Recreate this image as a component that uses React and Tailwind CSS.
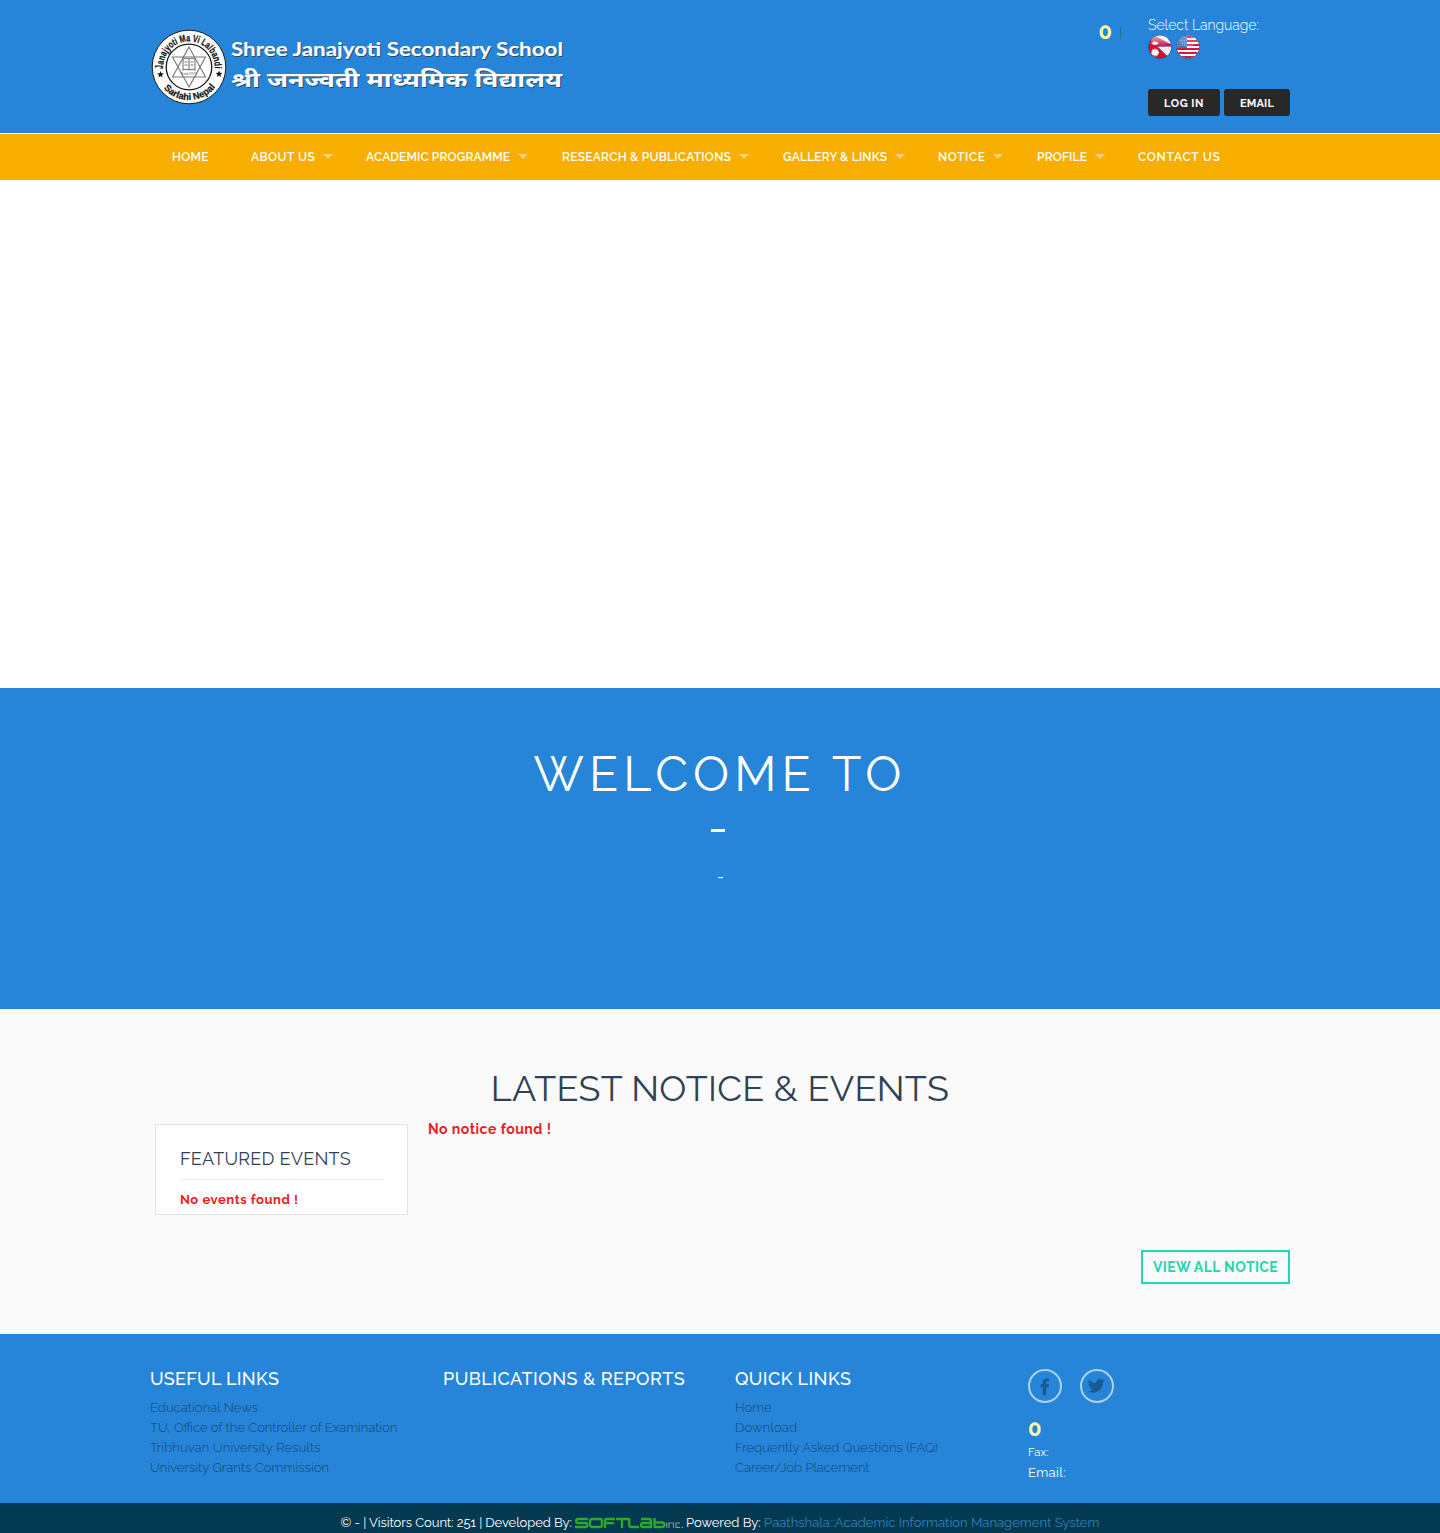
import React from 'react';

const NAV = [
  { label: 'HOME', cls: 'w-[37px] tracking-[0.25px] mr-[42px]' },
  { label: 'ABOUT US', cls: 'w-[64px] tracking-[0.46px]', arrow: 'mr-[33px]' },
  { label: 'ACADEMIC PROGRAMME', cls: 'w-[144px] tracking-[0.13px]', arrow: 'mr-[34px]' },
  { label: 'RESEARCH & PUBLICATIONS', cls: 'w-[169px] tracking-[0.24px]', arrow: 'mr-[34px]' },
  { label: 'GALLERY & LINKS', cls: 'w-[104px] tracking-[0.15px]', arrow: 'mr-[33px]' },
  { label: 'NOTICE', cls: 'w-[47px] tracking-[0.56px]', arrow: 'mr-[34px]' },
  { label: 'PROFILE', cls: 'w-[50px] tracking-[0.19px]', arrow: 'mr-[33px]' },
  { label: 'CONTACT US', cls: 'w-[82px] tracking-[0.74px]' },
];

const USEFUL = [
  ['Educational News', 'tracking-[0.09px]'],
  ['TU, Office of the Controller of Examination', ''],
  ['Tribhuvan University Results', 'tracking-[0.15px]'],
  ['University Grants Commission', 'tracking-[0.07px]'],
];

const QUICK = [
  ['Home', ''],
  ['Download', 'tracking-[0.18px]'],
  ['Frequently Asked Questions (FAQ)', 'tracking-[0.06px]'],
  ['Career/Job Placement', ''],
];

function Logo() {
  return (
    <svg className="block" width="420" height="80" viewBox="0 0 420 80">
      <defs>
        <path id="arcTop" d="M14 46 A25.7 25.7 0 1 1 64 46" />
        <path id="arcBottom" d="M6.5 47 A33.3 33.3 0 0 0 71.5 47" />
      </defs>
      <circle cx="39" cy="40" r="36.8" fill="#fff" stroke="#1b1b1b" strokeWidth="1" />
      <circle cx="39" cy="40" r="22.8" fill="#fff" stroke="#1b1b1b" strokeWidth="1.3" />
      <g fill="none" stroke="#777" strokeWidth="1.1">
        <path d="M39 20 L55.5 50 H22.5 Z" />
        <path d="M39 60 L22.5 30 H55.5 Z" />
        <path d="M33 32 q3 -1.5 6 0 q3 -1.5 6 0 v11 q-3 -1.5 -6 0 q-3 -1.5 -6 0 z M39 32 v11 M34.5 35 h3 M34.5 38 h3 M40.5 35 h3 M40.5 38 h3" />
      </g>
      <text x="39" y="47.5" textAnchor="middle" fontSize="3.5" fontFamily="Liberation Sans, sans-serif" fill="#555">Estd 1971</text>
      <g fontFamily="Liberation Sans, sans-serif" fontWeight="700" fontSize="10" fill="#111" stroke="#111" strokeWidth="0.2">
        <text><textPath href="#arcTop" startOffset="4" textLength="84" lengthAdjust="spacingAndGlyphs">Janajyoti Ma Vi Lalbandi</textPath></text>
        <text fontSize="9.5"><textPath href="#arcBottom" startOffset="16" textLength="59" lengthAdjust="spacingAndGlyphs">Sarlahi Nepal</textPath></text>
      </g>
      <path d="M10.5 44 l.9 2.3 2.5.1 -1.9 1.6 .6 2.4 -2.1-1.3 -2.1 1.3 .6-2.4 -1.9-1.6 2.5-.1z" fill="#111" />
      <path d="M69 43.5 l.9 2.3 2.5.1 -1.9 1.6 .6 2.4 -2.1-1.3 -2.1 1.3 .6-2.4 -1.9-1.6 2.5-.1z" fill="#111" />
      {[['#2b4a66', 1], ['#fff', 0]].map(([c, o]) => (
        <g key={c} fill={c} stroke={c} transform={`translate(${o} ${o})`}>
          <text x="81" y="29" fontFamily="Lato, sans-serif" fontWeight="700" fontSize="19.5" strokeWidth="0.1" textLength="332" lengthAdjust="spacingAndGlyphs">Shree Janajyoti Secondary School</text>
          <text x="81" y="60" fontFamily="'Noto Sans Devanagari', 'Noto Sans', sans-serif" fontWeight="700" fontSize="20" strokeWidth="0" textLength="331" lengthAdjust="spacingAndGlyphs">श्री जनज्वती माध्यमिक विद्यालय</text>
        </g>
      ))}
    </svg>
  );
}

function NepalFlag() {
  return (
    <svg className="block" width="24" height="24" viewBox="0 0 24 24">
      <defs>
        <clipPath id="np"><circle cx="12" cy="12" r="11.2" /></clipPath>
        <linearGradient id="shine" x1="0" y1="0" x2="0" y2="1">
          <stop offset="0" stopColor="#fff" stopOpacity=".65" />
          <stop offset="1" stopColor="#fff" stopOpacity="0" />
        </linearGradient>
      </defs>
      <circle cx="12" cy="12.2" r="11.8" fill="#1c4672" opacity=".7" />
      <g clipPath="url(#np)">
        <rect width="24" height="24" fill="#cf1138" />
        <path d="M5 0 L24 10 V0 Z" fill="#f6f6fa" />
        <path d="M9 11.5 L24 11.5 V24 H22 Z" fill="#f2f2f8" />
        <path d="M5 0 L24 10.5 L9 11.2 L22 24" fill="none" stroke="#3b57a5" strokeWidth="0.8" />
        <path d="M3 8 q4 4 8 0 l-1.5-.3 -.7-1.3 -1.5.6 -1.3-1 -1 1.5z" fill="#fff" />
        <circle cx="7" cy="17.5" r="3" fill="#fff" />
        <circle cx="7" cy="17.5" r="3.4" fill="none" stroke="#fff" strokeWidth="1.2" strokeDasharray="1 .8" />
      </g>
      <ellipse cx="12" cy="6" rx="9" ry="5.4" fill="url(#shine)" />
    </svg>
  );
}

function UsFlag() {
  return (
    <svg className="block" width="24" height="24" viewBox="0 0 24 24">
      <defs><clipPath id="us"><circle cx="12" cy="12" r="11.2" /></clipPath></defs>
      <circle cx="12" cy="12.2" r="11.8" fill="#1c4672" opacity=".7" />
      <g clipPath="url(#us)">
        <rect width="24" height="24" fill="#fff" />
        {[1, 5, 9, 13, 17, 21].map((y) => <rect key={y} y={y} width="24" height="2" fill="#d5173c" />)}
        <rect width="11" height="13" fill="#4272b8" />
        {[3, 5.5, 8, 10.5].map((y) => <path key={y} d={`M1 ${y} H11`} stroke="#8fb0dc" strokeWidth=".9" strokeDasharray="1 1.3" />)}
      </g>
      <ellipse cx="12" cy="6" rx="9" ry="5.4" fill="#fff" opacity=".2" />
    </svg>
  );
}

function SoftlabLogo() {
  return (
    <svg className="mr-[3px] ml-[3px] inline-block align-[-2px]" width="108" height="12" viewBox="0 0 108 12">
      <g fill="none" stroke="#2dab2b" strokeWidth="2.3" strokeLinejoin="round">
        <path d="M13 2 H3.5 Q1.2 2 1.2 4 Q1.2 6 3.5 6 H10.5 Q12.3 6 12.3 8 Q12.3 10 10.5 10 H0" />
        <path d="M17.5 2 H24.5 Q27 2 27 4 V8 Q27 10 24.5 10 H17.5 Q15 10 15 8 V4 Q15 2 17.5 2Z" />
        <path d="M40 2 H32 Q30 2 30 4 V11 M30 6.2 H39" />
        <path d="M41 2 H53 M47 2 V11" />
        <path d="M54.2 1 V8 Q54.2 10 56.5 10 H64" />
        <path d="M66 2 H74 Q76 2 76 4 V10 H68 Q66 10 66 8 Q66 6 68 6 H76" />
        <path d="M79.5 1 V10 H87 Q89.5 10 89.5 8 Q89.5 5.5 87 5.5 H79.5" />
      </g>
      <g fill="none" stroke="#8b969c" strokeWidth="1.1">
        <path d="M91.8 5.5 V11 M94 11 V6 H98.5 V11 M105 6 H101 V10.4 H105 M106.5 10.4 H108" />
      </g>
    </svg>
  );
}

export default function App() {
  return (
    <div className="flex h-[1533px] w-[1440px] flex-col overflow-hidden bg-white font-[Raleway,Lato,sans-serif] text-white">
      <header className="h-[133px] bg-[#2685d8]">
        <div className="mx-auto flex w-[1140px] justify-between">
          <div className="pt-[27px]"><Logo /></div>
          <div className="flex">
            <div className="mr-[27px] flex items-start">
              <span className="mt-[19px] text-[22px] leading-6 font-bold text-[#fffc9c]">0</span>
              <span className="mt-[27px] ml-2 h-3 w-px bg-[#2c6f93]" />
            </div>
            <div className="w-[142px] pt-[15px]">
              <div className="h-5 text-[14px] leading-5 font-light tracking-[-0.03px] whitespace-nowrap">Select Language:</div>
              <div className="flex gap-1"><NepalFlag /><UsFlag /></div>
              <div className="mt-[30px] flex gap-1 text-[11px] font-bold">
                <a className="h-[27px] w-[72px] rounded-[3px] bg-[#282828] text-center leading-[29px] tracking-[0.55px]">LOG IN</a>
                <a className="h-[27px] w-[66px] rounded-[3px] bg-[#282828] text-center leading-[29px] tracking-[0.2px]">EMAIL</a>
              </div>
            </div>
          </div>
        </div>
      </header>

      <nav className="mt-px h-[46px] bg-[#f7ae00]">
        <div className="mx-auto flex h-[46px] w-[1140px] items-center pl-[22px] text-[12px] leading-[18px] font-semibold">
          {NAV.map((n) => (
            <div key={n.label} className="flex items-center">
              <span className={`whitespace-nowrap ${n.cls}`}>{n.label}</span>
              {n.arrow && <span className={`mb-px ml-2 h-0 w-0 border-x-[5px] border-t-[5px] border-x-transparent border-t-[#fbd27a] ${n.arrow}`} />}
            </div>
          ))}
        </div>
      </nav>

      <div className="h-[508px] bg-white" />

      <section className="h-[321px] bg-[#2685d8] pt-[54px] text-center">
        <h1 className="text-[48px] leading-[64px] font-normal tracking-[5.2px]">WELCOME TO</h1>
        <div className="mt-[23px] mr-auto ml-[711px] h-[3px] w-[14px] bg-white" />
        <div className="mt-[33px] h-6 pl-px text-[16px] leading-6 font-normal">-</div>
      </section>

      <section className="h-[325px] bg-[#fafafa]">
        <div className="mx-auto w-[1140px] pt-[59px]">
          <h2 className="text-center text-[36px] leading-10 font-normal tracking-[0.28px] text-[#2f4152]">LATEST NOTICE &amp; EVENTS</h2>
          <div className="mt-[7px] flex h-[92px] pl-[5px]">
            <div className="mt-[9px] h-[91px] w-[253px] shrink-0 border border-[#dfe4e9] bg-white px-6">
              <h3 className="h-[55px] border-b border-[#e9ecee] pt-[22px] text-[18px] leading-6 font-normal tracking-[0.25px] text-[#2f4152]">FEATURED EVENTS</h3>
              <p className="mt-[10px] text-[13px] leading-5 font-bold tracking-[0.54px] text-[#ec1c24]">No events found !</p>
            </div>
            <p className="mt-1 ml-5 text-[14px] leading-5 font-bold tracking-[0.49px] text-[#ec1c24]">No notice found !</p>
          </div>
          <div className="mt-[43px] flex justify-end">
            <a className="h-[34px] w-[149px] border-2 border-[#20d8ae] text-center text-[14px] leading-[30px] font-bold tracking-[0.38px] text-[#20d8ae]">VIEW ALL NOTICE</a>
          </div>
        </div>
      </section>

      <footer className="h-[169px] bg-[#2685d8]">
        <div className="mx-auto flex w-[1140px] pt-[35px]">
          <div className="w-[293px]">
            <h4 className="text-[18px] leading-5 font-medium tracking-[0.28px]">USEFUL LINKS</h4>
            <ul className="mt-[9px] text-[13px] leading-5 font-light whitespace-nowrap text-[#10477a]">
              {USEFUL.map(([t, c]) => <li key={t} className={c}>{t}</li>)}
            </ul>
          </div>
          <div className="w-[292px]">
            <h4 className="text-[18px] leading-5 font-medium tracking-[0.48px] whitespace-nowrap">PUBLICATIONS &amp; REPORTS</h4>
          </div>
          <div className="w-[293px]">
            <h4 className="text-[18px] leading-5 font-medium tracking-[0.42px]">QUICK LINKS</h4>
            <ul className="mt-[9px] text-[13px] leading-5 font-light whitespace-nowrap text-[#10477a]">
              {QUICK.map(([t, c]) => <li key={t} className={c}>{t}</li>)}
            </ul>
          </div>
          <div>
            <div className="flex gap-[18px]">
              <a className="flex h-[34px] w-[34px] items-center justify-center rounded-full border-2 border-[#b0d0e6]">
                <svg width="10" height="17" viewBox="0 0 10 17"><path d="M2.8 17 V9.3 H.6 V6.2 H2.8 V4.3 Q2.8.4 6.2 .4 H9 V3.6 H7.3 Q6.2 3.6 6.2 4.8 V6.2 H9 L8.6 9.3 H6.2 V17 Z" fill="#175a94" /></svg>
              </a>
              <a className="flex h-[34px] w-[34px] items-center justify-center rounded-full border-2 border-[#b0d0e6]">
                <svg className="mr-px" width="17" height="14" viewBox="0 0 24 20"><path d="M23.6 2.4a9.6 9.6 0 0 1-2.8.8A4.9 4.9 0 0 0 22.9.4a9.8 9.8 0 0 1-3.1 1.2A4.9 4.9 0 0 0 11.5 6 13.9 13.9 0 0 1 1.4.9a4.9 4.9 0 0 0 1.5 6.5A4.9 4.9 0 0 1 .7 6.8a4.9 4.9 0 0 0 3.9 4.9 4.9 4.9 0 0 1-2.2.1 4.9 4.9 0 0 0 4.6 3.4A9.8 9.8 0 0 1-.3 17.2 13.9 13.9 0 0 0 21.1 4.9a9.9 9.9 0 0 0 2.5-2.5z" fill="#175a94" /></svg>
              </a>
            </div>
            <div className="mt-[13px] text-[22px] leading-6 font-bold text-[#fffc9c]">0</div>
            <div className="mt-[5px] text-[11px] leading-4 tracking-[0.4px]">Fax:</div>
            <div className="mt-[3px] text-[13px] leading-[18px] tracking-[0.4px]">Email:</div>
          </div>
        </div>
      </footer>

      <div className="h-[30px] bg-[#033a51] pt-[10px] text-center text-[13px] leading-5 font-normal whitespace-nowrap">
        <span className="tracking-[-0.07px]">© - | Visitors Count: 251 | Developed By:</span><SoftlabLogo /><span>Powered By: </span><span className="tracking-[0.02px] text-[#3a7fb5]">Paathshala::Academic Information Management System</span>
      </div>
    </div>
  );
}
